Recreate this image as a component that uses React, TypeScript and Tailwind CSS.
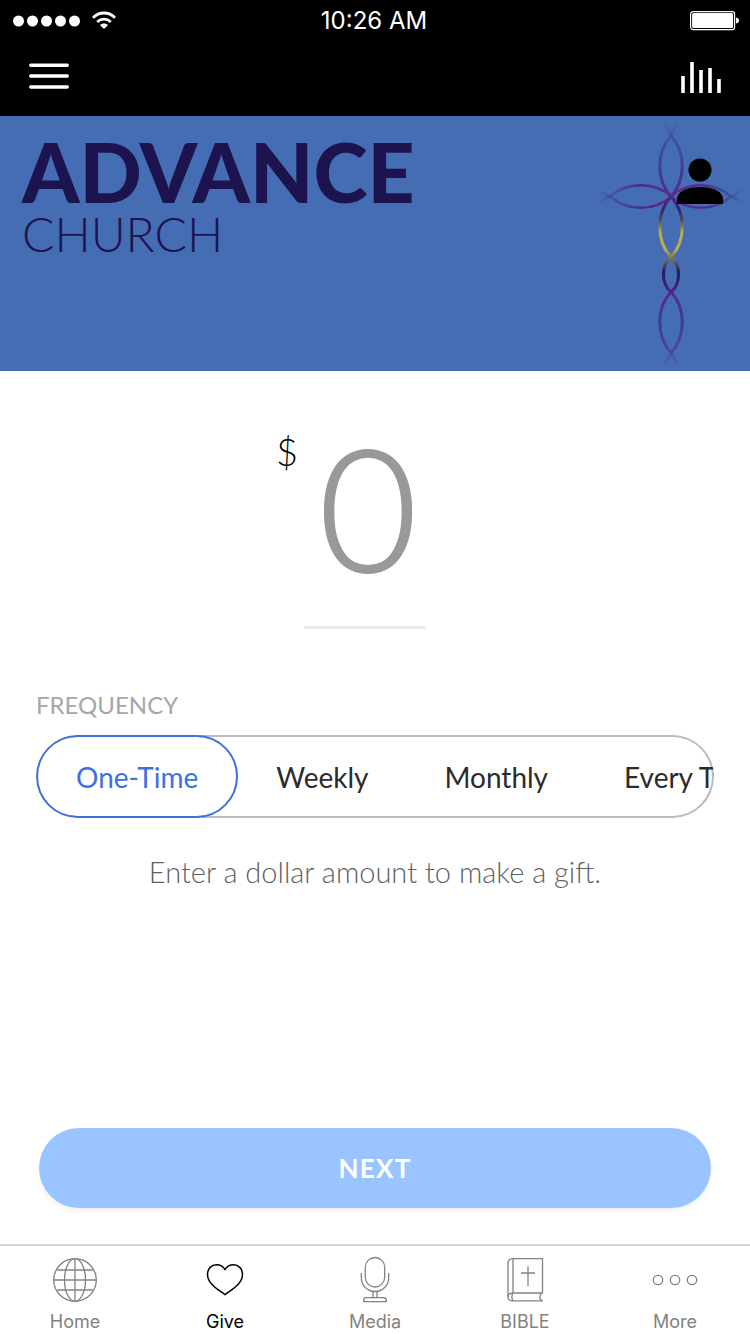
import { useState, type ReactNode } from "react";
import clsx from "clsx";

const frequencies = ["One-Time", "Weekly", "Monthly", "Every Two Weeks"];

type Tab = {
  label: string;
  icon: ReactNode;
};

const tabs: Tab[] = [
  { label: "Home", icon: <GlobeIcon /> },
  { label: "Give", icon: <HeartIcon /> },
  { label: "Media", icon: <MicIcon /> },
  { label: "BIBLE", icon: <BibleIcon /> },
  { label: "More", icon: <MoreIcon /> },
];

function GlobeIcon() {
  return (
    <svg aria-hidden="true" className="size-12" fill="none" stroke="currentColor" strokeWidth="1.3" viewBox="0 0 48 48">
      <circle cx="24" cy="24" r="21.3" />
      <ellipse cx="24" cy="24" rx="10.5" ry="21.3" />
      <path d="M24 2.7v42.6M2.7 24h42.6M6.2 14h35.6M6.2 34h35.6" />
    </svg>
  );
}

function HeartIcon() {
  return (
    <svg aria-hidden="true" className="size-12" fill="none" stroke="currentColor" strokeWidth="1.5" viewBox="0 0 48 48">
      <path
        d="M24 38.8C19 34.5 6.5 28.5 6.5 18.5C6.5 12.5 10.7 8.8 15.5 8.8C19.3 8.8 22.3 10.7 24 13.6C25.7 10.7 28.7 8.8 32.5 8.8C37.3 8.8 41.5 12.5 41.5 18.5C41.5 28.5 29 34.5 24 38.8Z"
        strokeLinejoin="round"
      />
    </svg>
  );
}

function MicIcon() {
  return (
    <svg aria-hidden="true" className="size-12" fill="none" stroke="currentColor" strokeWidth="1.3" viewBox="0 0 48 48">
      <rect height="29.5" rx="9.7" width="19.4" x="14.3" y="1.5" />
      <path d="M10.3 17v4.5c0 8 6 14 13.7 14s13.7-6 13.7-14V17" />
      <path d="M22 35.4v6.3M26 35.4v6.3M12.7 45.7v-1.5c0-1.5 1-2.5 2.5-2.5h17.6c1.5 0 2.5 1 2.5 2.5v1.5z" />
    </svg>
  );
}

function BibleIcon() {
  return (
    <svg aria-hidden="true" className="size-12" fill="none" stroke="currentColor" strokeWidth="1.3" viewBox="0 0 48 48">
      <path d="M41.5 37V2.7H12c-3 0-5 2-5 5v33c0 2.5 1.8 4.2 4.5 4.2h30" />
      <path d="M12 2.7V37M41.5 37H12c-3 0-5 1.7-5 4M12 37c-1.5 2.5-1.5 5.3 0 7.9M41.5 37c-3.7 2-3.7 5.9 0 7.9" />
      <path d="M27 10.5v19.5M20 17h14" />
    </svg>
  );
}

function MoreIcon() {
  return (
    <svg aria-hidden="true" className="size-12" fill="none" stroke="currentColor" strokeWidth="1.3" viewBox="0 0 48 48">
      <circle cx="7" cy="24" r="4.7" />
      <circle cx="24" cy="24" r="4.7" />
      <circle cx="41" cy="24" r="4.7" />
    </svg>
  );
}

function StatusBar() {
  return (
    <div className="grid h-10 grid-cols-3 items-center pl-3 pr-2.5 pt-0.5">
      <div className="flex items-center gap-3">
        <svg aria-label="Signal" className="h-3 w-17" fill="white" viewBox="0 0 68 12">
          <circle cx="6.5" cy="6" r="5.5" />
          <circle cx="20.5" cy="6" r="5.5" />
          <circle cx="34.5" cy="6" r="5.5" />
          <circle cx="48.5" cy="6" r="5.5" />
          <circle cx="62.5" cy="6" r="5.5" />
        </svg>
        <svg aria-label="Wi-Fi" className="h-5 w-6" fill="none" stroke="white" strokeWidth="2.8" viewBox="0 0 24 20">
          <path d="M1 6.7C7 .4 17 .4 23 6.7M5.2 10.9c4-3.8 9.6-3.8 13.6 0" />
          <path d="M12 18l-4-4.1c2.3-2 5.7-2 8 0z" fill="white" stroke="none" />
        </svg>
      </div>
      <time className="pr-1 text-center font-['Inter'] text-2xl leading-none">10:26 AM</time>
      <svg aria-label="Battery" className="h-5 w-[50px] justify-self-end" fill="none" viewBox="0 0 50 20">
        <rect height="18" rx="2.5" stroke="white" strokeWidth="1.2" width="44" x=".6" y=".6" />
        <rect fill="white" height="15" rx="1.5" width="41" x="2.1" y="2.1" />
        <path d="M46 6.5c2 .3 3 1.5 3 3s-1 2.7-3 3z" fill="white" />
      </svg>
    </div>
  );
}

function NavBar() {
  return (
    <div className="flex h-[76px] items-start justify-between px-7 pt-4">
      <button aria-label="Menu" className="cursor-pointer" type="button">
        <svg className="h-10 w-[42px]" stroke="white" strokeLinecap="round" strokeWidth="3.6" viewBox="0 0 42 40">
          <path d="M2.8 9.2h36.4M2.8 20h36.4M2.8 31h36.4" />
        </svg>
      </button>
      <button aria-label="Now playing" className="cursor-pointer" type="button">
        <svg className="h-10 w-[42px]" stroke="white" strokeWidth="3.6" viewBox="0 0 42 40">
          <path d="M3 20v17M12 6v31M21 14v23M30 12v25M39 23v14" />
        </svg>
      </button>
    </div>
  );
}

function CrossLogo() {
  return (
    <svg aria-hidden="true" className="h-[255px] w-[155px] shrink-0" fill="none" viewBox="0 0 155 255">
      <defs>
        <linearGradient gradientUnits="userSpaceOnUse" id="stem" x1="0" x2="0" y1="4" y2="252">
          <stop offset="0" stopColor="#463f98" stopOpacity="0" />
          <stop offset=".08" stopColor="#463f98" stopOpacity=".65" />
          <stop offset=".2" stopColor="#3a3a8c" stopOpacity=".9" />
          <stop offset=".3" stopColor="#5b2a8c" />
          <stop offset=".36" stopColor="#33226e" />
          <stop offset=".4" stopColor="#4a4560" />
          <stop offset=".45" stopColor="#b5ab4a" />
          <stop offset=".52" stopColor="#bcb04a" />
          <stop offset=".56" stopColor="#7d7050" />
          <stop offset=".61" stopColor="#24195c" />
          <stop offset=".67" stopColor="#3c1f78" />
          <stop offset=".71" stopColor="#5b2a90" />
          <stop offset=".8" stopColor="#343f8e" />
          <stop offset=".92" stopColor="#4a419c" stopOpacity=".85" />
          <stop offset="1" stopColor="#4a419c" stopOpacity="0" />
        </linearGradient>
        <linearGradient gradientUnits="userSpaceOnUse" id="arms" x1="0" x2="150" y1="0" y2="0">
          <stop offset="0" stopColor="#463f98" stopOpacity="0" />
          <stop offset=".12" stopColor="#463f98" stopOpacity=".6" />
          <stop offset=".3" stopColor="#432d86" />
          <stop offset=".5" stopColor="#652a90" />
          <stop offset=".75" stopColor="#4a3290" />
          <stop offset=".9" stopColor="#3a4796" stopOpacity=".7" />
          <stop offset="1" stopColor="#3a4796" stopOpacity="0" />
        </linearGradient>
      </defs>
      <g stroke="url(#arms)" strokeWidth="2.6">
        <path d="M2 74L15 80.5C32 95.5 60 95.5 76 80.5C92 65.5 119 65.5 136 80.5L149 87" />
        <path d="M2 87L15 80.5C32 65.5 60 65.5 76 80.5C92 95.5 119 95.5 136 80.5L149 74" />
      </g>
      <g stroke="url(#stem)" strokeWidth="3">
        <path d="M70 6L76 20C91 36 91 64 76 80.5C91 97 91 125 76 141C86 149 86 168 76 176C91 192 91 220 76 237L83 250" />
        <path d="M82 6L76 20C61 36 61 64 76 80.5C61 97 61 125 76 141C66 149 66 168 76 176C61 192 61 220 76 237L69 250" />
      </g>
    </svg>
  );
}

function Banner() {
  return (
    <div className="relative flex justify-between bg-[#456db4] pl-[22px]">
      <h1 className="pt-4 text-[#1d144f]">
        <span className="block text-[82px] font-black leading-[78px]">ADVANCE</span>
        <span className="block text-5xl font-light leading-12">CHURCH</span>
      </h1>
      <CrossLogo />
      <button aria-label="Profile" className="absolute right-6 top-10 cursor-pointer" type="button">
        <svg className="size-12 overflow-visible" fill="black" viewBox="0 0 48 48">
          <circle cx="22" cy="14" r="11.5" />
          <path d="M-1 48v-4.5C-1 35 10 31 22 31s23 4 23 12.5V48z" />
        </svg>
      </button>
    </div>
  );
}

function AmountField() {
  return (
    <div className="grid grid-cols-[1fr_auto_1fr] pr-5 font-light">
      <label className="justify-self-end pr-1.5 pt-11 text-[38px] leading-10 text-black" htmlFor="amount">
        $
      </label>
      <input
        className="h-[242px] w-[122px] border-b-[3px] border-[#ebebeb] pl-1.5 text-center text-[170px] text-[#999] outline-none [-webkit-text-stroke:2px_#999] placeholder:text-[#999]"
        id="amount"
        inputMode="decimal"
        placeholder="0"
        type="text"
      />
    </div>
  );
}

function FrequencyPicker() {
  const [selected, setSelected] = useState(frequencies[0]);

  return (
    <fieldset className="mt-14 min-w-0">
      <legend className="pb-2.5 text-2xl leading-10 text-[#a6a6a8]">FREQUENCY</legend>
      <div className="relative flex h-[83px] overflow-x-auto overflow-y-hidden rounded-full inset-ring-2 inset-ring-[#bcbcbe] [scrollbar-width:none]">
        {frequencies.map((frequency) => (
          <label
            className={clsx(
              "relative flex shrink-0 cursor-pointer items-center rounded-full border-2 px-9 text-[28px] first:px-[38px]",
              selected === frequency ? "border-[#3f6fe0] text-[#3b70e2]" : "border-transparent text-[#2b2b2b]",
            )}
            key={frequency}
          >
            <input
              checked={selected === frequency}
              className="sr-only"
              name="frequency"
              onChange={() => setSelected(frequency)}
              type="radio"
              value={frequency}
            />
            {frequency}
          </label>
        ))}
      </div>
    </fieldset>
  );
}

function TabBar() {
  return (
    <nav className="grid grid-cols-5 border-t-2 border-[#d6d6d6] bg-white pt-2.5 font-['Inter'] text-lg">
      {tabs.map((tab) => (
        <a
          aria-current={tab.label === "Give" ? "page" : undefined}
          className={clsx("flex flex-col items-center gap-1.5", tab.label === "Give" ? "text-black" : "text-[#828282]")}
          href={`#${tab.label.toLowerCase()}`}
          key={tab.label}
        >
          {tab.icon}
          <span className="leading-6">{tab.label}</span>
        </a>
      ))}
    </nav>
  );
}

export default function App() {
  return (
    <div className="flex min-h-screen flex-col bg-white font-['Lato','Open_Sans',sans-serif]">
      <header className="bg-black text-white">
        <StatusBar />
        <NavBar />
      </header>
      <Banner />
      <main className="flex flex-1 flex-col px-9 pb-9 pt-4">
        <AmountField />
        <FrequencyPicker />
        <p className="mt-9 text-center text-[29px] font-light leading-9 text-[#5f5f66]">
          Enter a dollar amount to make a gift.
        </p>
        <div className="mt-auto px-[3px]">
          <button
            className="h-20 w-full cursor-pointer rounded-full bg-[#99c4ff] text-[26px] font-bold tracking-wider text-white shadow-md shadow-black/5"
            type="button"
          >
            NEXT
          </button>
        </div>
      </main>
      <TabBar />
    </div>
  );
}
